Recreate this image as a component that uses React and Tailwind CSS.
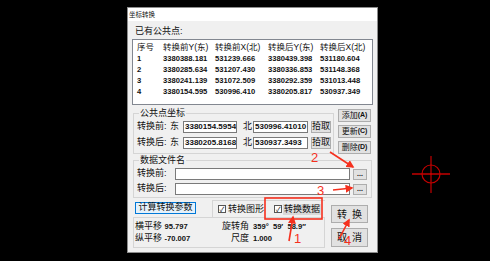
import React from 'react'

const rows = [
  ['1', '3380388.181', '531239.666', '3380439.398', '531180.604'],
  ['2', '3380285.634', '531207.430', '3380336.853', '531148.368'],
  ['3', '3380241.139', '531072.509', '3380292.359', '531013.448'],
  ['4', '3380154.595', '530996.410', '3380205.817', '530937.349'],
]

const btn = 'bg-[#e1e1e1] border border-[#adadad] flex items-center justify-center text-[#111]'
const input = 'bg-white border border-[#7a7a7a] h-[12px] text-[8px] font-bold leading-[10px] pl-[1px] overflow-hidden whitespace-nowrap'

function Check({ label, focus }) {
  return (
    <div className="flex items-center gap-[1px]">
      <span className="w-[8px] h-[8px] border border-[#555] bg-white flex items-center justify-center text-[7px] leading-none">✓</span>
      <span className={`text-[9px] leading-[11px] px-[1px] ${focus ? 'bg-[#d9d9d9]' : ''}`}>{label}</span>
    </div>
  )
}

function CoordRow({ label, east, north }) {
  return (
    <div className="flex items-center h-[14px]">
      <span className="w-[33px] text-[9px]">{label}</span>
      <span className="w-[13px] text-[9px]">东</span>
      <div className={`${input} w-[54px]`}>{east}</div>
      <span className="ml-[6px] w-[10px] text-[9px]">北</span>
      <div className={`${input} w-[55px]`}>{north}</div>
      <div className={`${btn} ml-[3px] w-[20px] h-[12px] text-[9px]`}>拾取</div>
    </div>
  )
}

function FileRow({ label }) {
  return (
    <div className="flex items-center h-[12px]">
      <span className="w-[38px] text-[9px]">{label}</span>
      <div className="bg-white border border-[#7a7a7a] w-[175px] h-[12px]" />
      <div className={`${btn} ml-[3px] w-[14px] h-[11px] text-[7px] font-bold`}>...</div>
    </div>
  )
}

export default function App() {
  return (
    <div className="relative w-[490px] h-[261px] bg-black overflow-hidden font-['Liberation_Sans','Noto_Sans_CJK_SC',sans-serif] text-[#111]">
      <div className="absolute left-[127px] top-[7px] w-[251px] h-[246px] bg-[#f0f0f0] border border-[#8c8c8c] flex flex-col">
        <div className="h-[13px] bg-white text-[6.5px] leading-[13px] pl-[1px]">坐标转换</div>
        <div className="flex flex-col px-[4px]">
          <div className="mt-[4px] ml-[3px] h-[13px] text-[9px] leading-[13px]">已有公共点:</div>

          {/* list of common points */}
          <div className="mt-[1px] h-[66px] bg-white border border-[#828790] pt-[2px] pl-[4px]">
            <div className="grid grid-cols-[26px_52px_53px_52px_1fr] h-[11px] items-center text-[8.5px] leading-none">
              <span>序号</span>
              <span>转换前Y(东)</span>
              <span>转换前X(北)</span>
              <span>转换后Y(东)</span>
              <span>转换后X(北)</span>
            </div>
            {rows.map(r => (
              <div key={r[0]} className="grid grid-cols-[26px_52px_53px_52px_1fr] h-[11px] items-center text-[7.6px] font-bold leading-none">
                {r.map((c, i) => <span key={i}>{c}</span>)}
              </div>
            ))}
          </div>

          <div className="flex">
            <fieldset className="mt-[2px] ml-[1px] w-[201px] border border-[#d5d5d5] pl-[3px] pb-[3px]">
              <legend className="ml-[2px] px-[1px] text-[9px] leading-[12px]">公共点坐标</legend>
              <div className="flex flex-col gap-[2px] mt-[1px]">
                <CoordRow label="转换前:" east="3380154.5954" north="530996.41010" />
                <CoordRow label="转换后:" east="3380205.8168" north="530937.3493" />
              </div>
            </fieldset>
            <div className="ml-[4px] mt-[4px] flex flex-col gap-[3px]">
              <div className={`${btn} w-[33px] h-[13px] text-[8px]`}>添加<b className="text-[7px]">(A)</b></div>
              <div className={`${btn} w-[33px] h-[13px] text-[8px]`}>更新<b className="text-[7px]">(C)</b></div>
              <div className={`${btn} w-[33px] h-[13px] text-[8px]`}>删除<b className="text-[7px]">(D)</b></div>
            </div>
          </div>

          <fieldset className="ml-[1px] mr-[1px] border border-[#d5d5d5] pl-[3px] pb-[2px]">
            <legend className="ml-[2px] px-[1px] text-[9px] leading-[12px]">数据文件名</legend>
            <div className="flex flex-col gap-[3px] mt-[2px]">
              <FileRow label="转换前:" />
              <FileRow label="转换后:" />
            </div>
          </fieldset>

          <div className="flex mt-[1px]">
            <div className="ml-[1px] w-[192px] flex flex-col">
              <div className="flex h-[18px]">
                <div className="ml-[2px] mt-[3px] w-[61px] h-[12px] bg-[#e5f1fb] border border-[#0078d7] flex items-center justify-center text-[9px]">计算转换参数</div>
                <div className="ml-[16px] mt-[1px] flex-1 border-l border-t border-[#d5d5d5] flex items-center gap-[9px] pl-[5px]">
                  <Check label="转换图形" />
                  <Check label="转换数据" focus />
                </div>
              </div>
              <div className="h-[31px] border border-[#d5d5d5] grid grid-cols-[88px_1fr] content-center gap-y-[1px] text-[9px] leading-[11px]">
                <div className="pl-[1px]">横平移 <b className="text-[7.6px]">95.797</b></div>
                <div className="flex"><span className="w-[27px] text-right">旋转角</span><b className="ml-[4px] text-[7.6px]">359°&nbsp; 59′&nbsp; 58.9″</b></div>
                <div className="pl-[1px]">纵平移 <b className="text-[7.6px]">-70.007</b></div>
                <div className="flex"><span className="w-[27px] text-right">尺度</span><b className="ml-[4px] text-[7.6px]">1.000</b></div>
              </div>
            </div>
            <div className="ml-[6px] mt-[6px] flex flex-col gap-[5px]">
              <div className={`${btn} w-[37px] h-[18px] text-[10px] !justify-between px-[5px]`}><span>转</span><span>换</span></div>
              <div className={`${btn} w-[37px] h-[19px] text-[10px] !justify-between px-[5px]`}><span>取</span><span>消</span></div>
            </div>
          </div>
        </div>
      </div>

      {/* red annotations */}
      <svg className="absolute left-0 top-0" width="490" height="261" viewBox="0 0 490 261">
        <defs>
          <marker id="ah" viewBox="0 0 10 10" refX="8" refY="5" markerWidth="5" markerHeight="5" orient="auto">
            <path d="M0 0L10 5L0 10z" fill="#f5301e" />
          </marker>
        </defs>
        <g stroke="#f5301e" strokeWidth="1.6" fill="none">
          <rect x="265" y="198" width="57" height="21" />
          <line x1="330" y1="152" x2="353" y2="167" markerEnd="url(#ah)" />
          <line x1="333" y1="190" x2="352" y2="188" markerEnd="url(#ah)" />
          <line x1="289" y1="241" x2="293" y2="217" markerEnd="url(#ah)" />
          <line x1="339" y1="239" x2="349" y2="220" markerEnd="url(#ah)" />
        </g>
        <g fill="#f5301e" fontSize="13" fontFamily="Liberation Sans, sans-serif">
          <text x="311" y="162">2</text>
          <text x="317" y="195">3</text>
          <text x="294" y="243">1</text>
          <text x="344" y="245">4</text>
        </g>
        <g stroke="#c40000" fill="none">
          <circle cx="431" cy="174" r="9" strokeWidth="1.2" />
          <line x1="412" y1="174" x2="450" y2="174" strokeWidth="1.5" />
          <line x1="431" y1="156" x2="431" y2="193" strokeWidth="1.2" />
        </g>
        <circle cx="431" cy="174" r="1" fill="#c40000" />
      </svg>
    </div>
  )
}
